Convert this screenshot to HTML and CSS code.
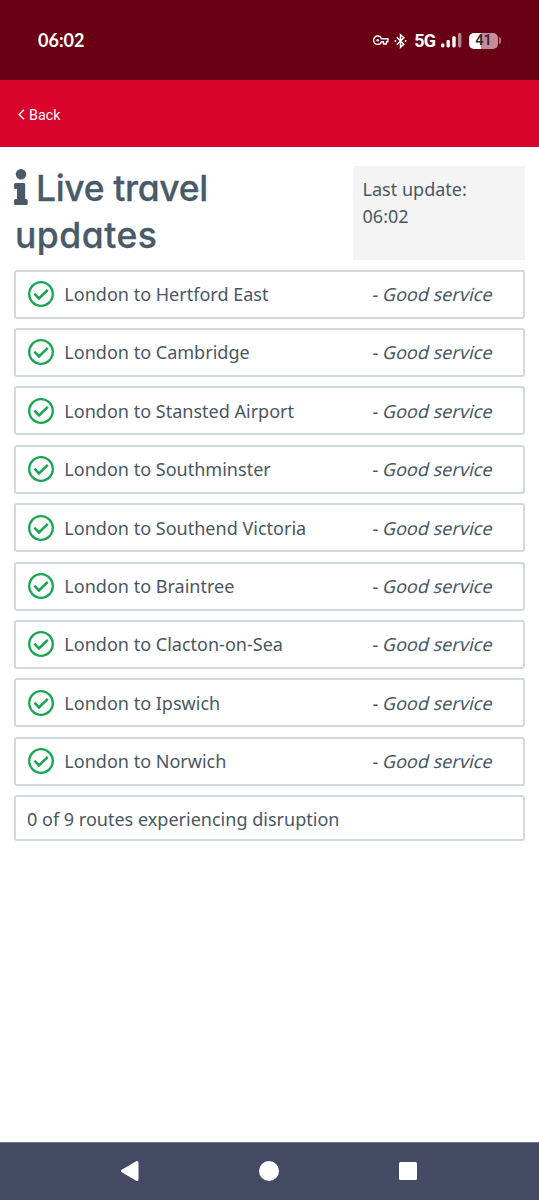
FILE: index.html
```html
<!DOCTYPE html>
<html lang="en">
<head>
<meta charset="utf-8">
<title>Live travel updates</title>
<link rel="stylesheet" href="styles.css">
</head>
<body>
<svg class="symbols" aria-hidden="true">
  <symbol id="ok" viewBox="0 0 26 26"><circle cx="13" cy="13" r="11.8" fill="none" stroke="#18a551" stroke-width="2.3"/><path d="M6.400 12.600l4.600 4.800 8.800-8.600" fill="none" stroke="#18a551" stroke-width="2.500"/></symbol>
</svg>
<div class="status-bar">
  <span class="clock">06:02</span>
  <div class="status-icons">
    <svg class="key" width="16" height="11" viewBox="0 0 16 11" fill="none" stroke="#fff" stroke-width="1.4" stroke-linejoin="round"><path d="M8.4 3.8C7.8 2 6.4 1 4.800 1a4.200 4.200 0 0 0 0 8.400c1.600 0 3-1 3.600-2.700h2V9h3V6.700H15V3.800z"/><circle cx="4.800" cy="5.200" r="1.300" fill="#fff" stroke="none"/></svg>
    <svg class="bluetooth" width="13" height="16" viewBox="0 0 13 16" fill="none" stroke="#fff" stroke-width="1.500"><path d="M2.800 4.300l7 7-3.300 3V1.700l3.300 3-7 7"/><circle cx="1.400" cy="8" r="1" fill="#fff" stroke="none"/><circle cx="11.600" cy="8" r="1" fill="#fff" stroke="none"/></svg>
    <span class="network">5G</span>
    <svg class="signal" width="21" height="15" viewBox="0 0 21 15" fill="#fff"><rect x="0" y="10.500" width="3.400" height="4" rx="1.400"/><rect x="5.500" y="7" width="3.400" height="7.500" rx="1.400"/><rect x="11.300" y="3.200" width="3.400" height="11.300" rx="1.400"/><rect x="17" y="0" width="3.400" height="14.500" rx="1.400" opacity=".5"/></svg>
    <div class="battery"><span>41</span></div><i class="battery-tip"></i>
  </div>
</div>
<header class="app-bar">
  <svg width="7" height="11" viewBox="0 0 7 11" fill="none" stroke="#fff" stroke-width="1.500"><path d="M6 .8L1.200 5.500 6 10.200"/></svg>
  <span>Back</span>
</header>
<main class="content">
  <div class="intro">
    <h1><svg class="info" width="14" height="37" viewBox="0 0 14 37" fill="#495a69"><circle cx="7" cy="5.300" r="5.200"/><path d="M1.500 14h8.200q1.500 0 1.500 1.500V30h1q1.500 0 1.500 1.500V34.500q0 1.500-1.500 1.500H1.500Q0 36 0 34.500V31.500Q0 30 1.500 30H3V20H1.500Q0 20 0 18.500V15.500Q0 14 1.500 14z"/></svg><span class="line-one">Live travel</span><br><span class="line-two">updates</span></h1>
    <div class="last-update">Last update:<br>06:02</div>
  </div>
  <ul class="routes">
    <li><svg class="tick"><use href="#ok"/></svg><span>London to Hertford East</span><span class="state">- Good service</span></li>
    <li><svg class="tick"><use href="#ok"/></svg><span>London to Cambridge</span><span class="state">- Good service</span></li>
    <li><svg class="tick"><use href="#ok"/></svg><span>London to Stansted Airport</span><span class="state">- Good service</span></li>
    <li><svg class="tick"><use href="#ok"/></svg><span>London to Southminster</span><span class="state">- Good service</span></li>
    <li><svg class="tick"><use href="#ok"/></svg><span>London to Southend Victoria</span><span class="state">- Good service</span></li>
    <li><svg class="tick"><use href="#ok"/></svg><span>London to Braintree</span><span class="state">- Good service</span></li>
    <li><svg class="tick"><use href="#ok"/></svg><span>London to Clacton-on-Sea</span><span class="state">- Good service</span></li>
    <li><svg class="tick"><use href="#ok"/></svg><span>London to Ipswich</span><span class="state">- Good service</span></li>
    <li><svg class="tick"><use href="#ok"/></svg><span>London to Norwich</span><span class="state">- Good service</span></li>
    <li class="summary">0 of 9 routes experiencing disruption</li>
  </ul>
</main>
<nav class="nav-bar">
  <svg width="20" height="22" viewBox="0 0 20 22" fill="#fff" stroke="#fff" stroke-width="3" stroke-linejoin="round"><path d="M2.500 11L17 2.500v17z"/></svg>
  <svg width="20" height="20" viewBox="0 0 20 20" fill="#fff"><circle cx="10" cy="10" r="10"/></svg>
  <svg width="18" height="18" viewBox="0 0 18 18" fill="#fff"><rect width="18" height="18" rx="1.500"/></svg>
</nav>
</body>
</html>
```
FILE: styles.css
```css
* { box-sizing: border-box; }
body {
  margin: 0;
  height: 1200px;
  display: flex;
  flex-direction: column;
  background: #fff;
  color: #495763;
  font-family: "Noto Sans", sans-serif;
  font-size: 18.050px;
}
.symbols { display: none; }
svg { display: block; flex: none; }

.status-bar {
  height: 80px;
  padding: 1px 38px 0;
  display: flex;
  align-items: center;
  justify-content: space-between;
  background: #690013;
  color: #fff;
}
.clock { padding-bottom: 2px; font: 700 18px/20px Lato, sans-serif; }
.status-icons { display: flex; align-items: center; }
.bluetooth { margin-left: 5px; }
.network { margin-left: 7px; font: 700 18px/20px Roboto, sans-serif; letter-spacing: -0.900px; }
.signal { margin-left: 6px; }
.battery {
  width: 29px;
  height: 16px;
  margin-left: 7px;
  border-radius: 5px;
  background: linear-gradient(90deg, #fff 41%, #c58c99 41%);
  color: #3a252c;
  font: 600 14.500px/16px Roboto, sans-serif;
  text-align: center;
}
.battery-tip { width: 2px; height: 7px; margin-left: 1px; border-radius: 0 2px 2px 0; background: #b2707f; }

.app-bar {
  height: 67px;
  padding: 2px 18px 0;
  display: flex;
  align-items: center;
  gap: 4px;
  background: #d90429;
  color: #fff;
  font: 400 14.300px/20px Roboto, sans-serif;
}

.content { flex: 1; padding: 19px 14px 0; }
.intro { display: flex; justify-content: space-between; height: 94px; }
h1 {
  margin: 0;
  font: 500 35.500px/46.500px Inter, sans-serif;
  font-feature-settings: "cv11";
  color: #495a69;
  white-space: nowrap;
  -webkit-text-stroke: 0.300px #495a69;
}
.line-one { letter-spacing: -0.350px; }
.line-two { margin-left: 1px; letter-spacing: 0.500px; }
.info { display: inline-block; margin-right: 8px; vertical-align: -5px; }
.last-update {
  width: 172px;
  padding: 10px 9.500px;
  background: #f4f4f4;
  line-height: 27px;
}

.routes { list-style: none; margin: 9.600px 0 0; padding: 0; display: grid; gap: 9.400px; }
.routes li {
  height: 49px;
  padding: 0 29.500px 0 12px;
  display: flex;
  align-items: center;
  border: 2px solid #d0d9e1;
  border-radius: 3px;
}
.tick { width: 26px; height: 26px; margin-right: 10.300px; }
/* slanted upright letterforms */
.state { margin-left: auto; transform: skewX(-14deg); }
.routes .summary { height: 46px; padding: 1px 0 0 11px; }

.nav-bar {
  height: 58px;
  padding: 0 122px 2px 120px;
  display: flex;
  align-items: center;
  justify-content: space-between;
  border-top: 1px solid #74778b;
  background: #454a64;
}
.nav-bar svg:nth-child(2) { margin-right: 1px; }
```
